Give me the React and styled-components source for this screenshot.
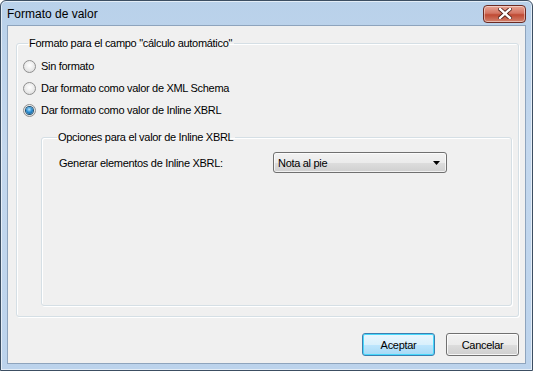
import React from 'react'
import styled, { createGlobalStyle } from 'styled-components'

const Global = createGlobalStyle`
  html, body {
    margin: 0;
    padding: 0;
    width: 533px;
    height: 371px;
    overflow: hidden;
    background: #fff;
  }
  * { box-sizing: border-box; }
`

const Window = styled.div`
  width: 533px;
  height: 371px;
  display: flex;
  flex-direction: column;
  border: 1px solid #3c4e62;
  border-radius: 6px 6px 0 0;
  background: linear-gradient(to bottom, #b9d1ea 0%, #c4d8ee 40%, #bcd3ec 100%);
  padding: 0 6px 6px 6px;
  box-shadow: inset 0 0 0 1px rgba(255, 255, 255, 0.6);
  font-family: 'Liberation Sans', Arial, sans-serif;
  font-size: 11px;
  letter-spacing: -0.3px;
  color: #000;
`

const TitleBar = styled.div`
  height: 24px;
  display: flex;
  align-items: center;
  justify-content: space-between;
`

const Title = styled.span`
  font-size: 12px;
  letter-spacing: 0;
  color: #000;
  margin-top: 2px;
`

const CloseButton = styled.div`
  width: 43px;
  height: 18px;
  margin-top: 1px;
  border: 1px solid #6b2a22;
  border-radius: 4px;
  background: linear-gradient(to bottom, #e8a493 0%, #d47563 45%, #c04a33 55%, #d2826e 100%);
  box-shadow: inset 0 0 0 1px rgba(255, 255, 255, 0.45);
  display: flex;
  align-items: center;
  justify-content: center;
`

const Client = styled.div`
  flex: 1;
  display: flex;
  flex-direction: column;
  background: #f0f0f0;
  border: 1px solid #8ea4bd;
  padding: 11px 6px 7px 8px;
`

const Group = styled.fieldset`
  margin: 0;
  padding: ${p => p.$pad || '0'};
  border: 1px solid #d5dfe5;
  border-radius: 3px;
  box-shadow: 1px 1px 0 #fff, inset 1px 1px 0 #fff;
  min-width: 0;
  flex: ${p => p.$grow ? 1 : 'none'};
  display: flex;
  flex-direction: column;
`

const InnerGroup = styled(Group)`
  margin: 10px 0 0 18px;
`

const Legend = styled.legend`
  padding: 0 2px 0 1px;
  margin-left: ${p => p.$ml || '5px'};
  font-size: 11px;
  line-height: 13px;
  color: #000;
`

const RadioRow = styled.label`
  display: flex;
  align-items: center;
  height: 22px;
  gap: 5px;
`

const RadioDot = styled.span`
  width: 13px;
  height: 13px;
  border-radius: 50%;
  border: 1px solid #8f8f8f;
  background: radial-gradient(circle at 50% 40%, #ffffff 0%, #ececec 50%, #d4d4d4 100%);
  display: flex;
  align-items: center;
  justify-content: center;
  &::after {
    content: '';
    width: 7px;
    height: 7px;
    border-radius: 50%;
    display: ${p => p.$checked ? 'block' : 'none'};
    background: radial-gradient(circle at 45% 35%, #b4e6ff 0%, #2d8fd4 45%, #0d4e7e 100%);
    box-shadow: 0 0 0 1px #1d4f70;
  }
`

const FieldRow = styled.div`
  display: flex;
  align-items: center;
  padding: 8px 0 0 9px;
`

const FieldLabel = styled.span`
  width: 214px;
`

const Select = styled.div`
  width: 174px;
  height: 21px;
  border: 1px solid #707070;
  border-radius: 3px;
  background: linear-gradient(to bottom, #f2f2f2 0%, #ebebeb 50%, #dddddd 51%, #cfcfcf 100%);
  box-shadow: inset 0 0 0 1px rgba(255, 255, 255, 0.7);
  display: flex;
  align-items: center;
  justify-content: space-between;
  padding: 0 6px 0 4px;
`

const Footer = styled.div`
  display: flex;
  justify-content: flex-end;
  gap: 11px;
  padding: 16px 0 0 0;
`

const Button = styled.button`
  width: 73px;
  height: 23px;
  font-family: 'Liberation Sans', Arial, sans-serif;
  font-size: 11px;
  letter-spacing: -0.3px;
  color: #000;
  border-radius: 3px;
  border: 1px solid ${p => p.$default ? '#3c7fb1' : '#707070'};
  background: ${p => p.$default
    ? 'linear-gradient(to bottom, #eaf6fd 0%, #d9f0fc 50%, #bee6fd 51%, #a7d9f5 100%)'
    : 'linear-gradient(to bottom, #f2f2f2 0%, #ebebeb 50%, #dddddd 51%, #cfcfcf 100%)'};
  box-shadow: inset 0 0 0 1px ${p => p.$default ? '#48d8fb' : 'rgba(255,255,255,0.8)'};
  padding: 0;
`

const options = [
  { label: 'Sin formato', checked: false },
  { label: 'Dar formato como valor de XML Schema', checked: false },
  { label: 'Dar formato como valor de Inline XBRL', checked: true },
]

const App = () => {
  return (
    <>
      <Global />
      <Window>
        <TitleBar>
          <Title>Formato de valor</Title>
          <CloseButton>
            <svg width="14" height="11" viewBox="0 0 14 11">
              <path d="M2 1 L12 10 M12 1 L2 10" stroke="#4a1a14" strokeWidth="4" strokeLinecap="square" />
              <path d="M2 1 L12 10 M12 1 L2 10" stroke="#ffffff" strokeWidth="2.4" strokeLinecap="square" />
            </svg>
          </CloseButton>
        </TitleBar>
        <Client>
          <Group $grow $pad="5px 6px 10px 6px">
            <Legend>Formato para el campo "cálculo automático"</Legend>
            {options.map(o => (
              <RadioRow key={o.label}>
                <RadioDot $checked={o.checked} />
                {o.label}
              </RadioRow>
            ))}
            <InnerGroup $grow $pad="0 8px">
              <Legend $ml="7px">Opciones para el valor de Inline XBRL</Legend>
              <FieldRow>
                <FieldLabel>Generar elementos de Inline XBRL:</FieldLabel>
                <Select>
                  <span>Nota al pie</span>
                  <svg width="7" height="4" viewBox="0 0 7 4">
                    <path d="M0 0 H7 L3.5 4 Z" fill="#000" />
                  </svg>
                </Select>
              </FieldRow>
            </InnerGroup>
          </Group>
          <Footer>
            <Button $default>Aceptar</Button>
            <Button>Cancelar</Button>
          </Footer>
        </Client>
      </Window>
    </>
  )
}

export default App
